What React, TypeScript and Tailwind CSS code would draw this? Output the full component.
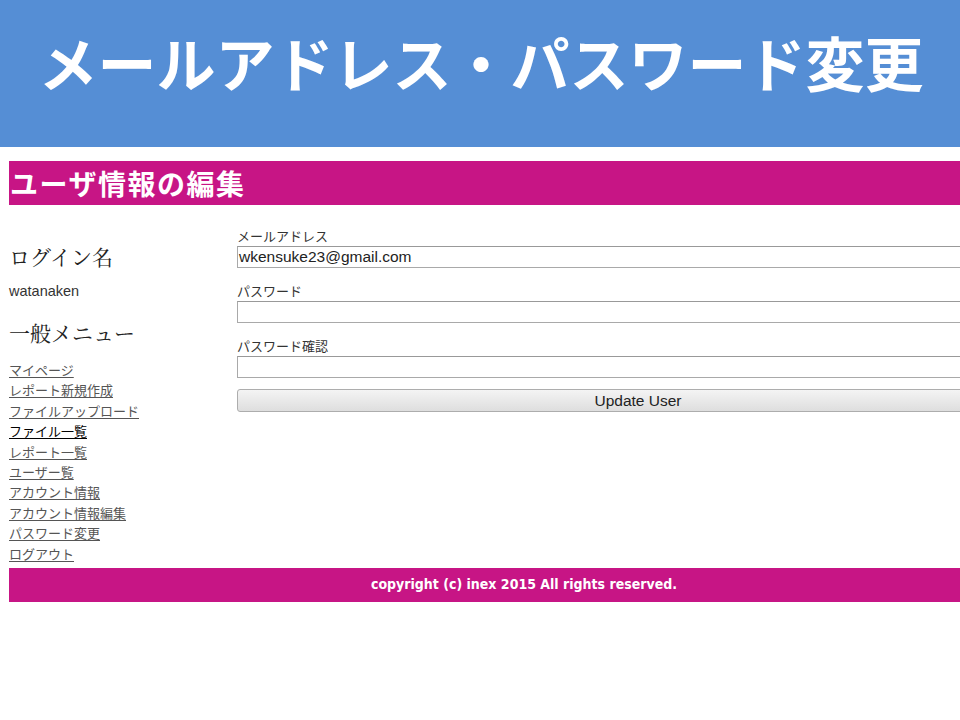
import React from "react";

const links = [
  "マイページ",
  "レポート新規作成",
  "ファイルアップロード",
  "ファイル一覧",
  "レポート一覧",
  "ユーザー覧",
  "アカウント情報",
  "アカウント情報編集",
  "パスワード変更",
  "ログアウト",
];

const jp = { fontFamily: '"Noto Sans CJK JP", sans-serif' };

export default function App() {
  return (
    <div className="w-[960px] h-[720px] overflow-hidden bg-white" style={jp}>
      <div className="h-[147px] bg-[#558ed5] flex justify-center pt-[22px] pl-[2px]">
        <h1 className="text-white font-bold text-[59px] leading-[80px] tracking-[0px] whitespace-nowrap">
          メールアドレス・パスワード変更
        </h1>
      </div>
      <div className="ml-[9px] w-[1030px] mt-[14px]">
        <div className="h-[44px] bg-[#c71585] flex items-center pl-[1px]">
          <span className="text-white font-bold text-[28px] leading-none tracking-[1.5px]">ユーザ情報の編集</span>
        </div>
        <div className="flex">
          <div className="w-[228px] shrink-0 pt-[37px]">
            <div className="text-[21px] leading-[28px] text-[#222]" style={{ fontFamily: '"Noto Serif CJK JP", "Noto Sans CJK JP", serif' }}>
              ログイン名
            </div>
            <div className="mt-[12px] text-[14.5px] leading-[18px] text-[#333]" style={{ fontFamily: '"Liberation Sans", sans-serif' }}>
              watanaken
            </div>
            <div className="mt-[18px] text-[21px] leading-[28px] text-[#222]" style={{ fontFamily: '"Noto Serif CJK JP", "Noto Sans CJK JP", serif' }}>
              一般メニュー
            </div>
            <ul className="mt-[12px]">
              {links.map((l) => (
                <li key={l} className="h-[20.4px] leading-[20px]">
                  <a
                    href="#"
                    className={
                      "text-[13px] underline underline-offset-2 " +
                      (l === "ファイル一覧" ? "text-black" : "text-[#555]")
                    }
                  >
                    {l}
                  </a>
                </li>
              ))}
            </ul>
          </div>
          <div className="w-[803px] pt-[21px]">
            <label className="block text-[13px] leading-[20px] text-[#333]">メールアドレス</label>
            <div className="h-[22px] border border-[#a9a9a9] border-t-[#999] flex items-center px-[1px] text-[15.5px] text-[#222]" style={{ fontFamily: '"Liberation Sans", sans-serif' }}>
              wkensuke23@gmail.com
            </div>
            <label className="block mt-[13px] text-[13px] leading-[20px] text-[#333]">パスワード</label>
            <div className="h-[22px] border border-[#a9a9a9] border-t-[#999]" />
            <label className="block mt-[13px] text-[13px] leading-[20px] text-[#333]">パスワード確認</label>
            <div className="h-[22px] border border-[#a9a9a9] border-t-[#999]" />
            <button
              className="mt-[11px] w-full h-[23px] rounded-[3px] border border-[#adadad] bg-gradient-to-b from-[#f4f4f4] to-[#dedede] text-[15.5px] leading-[20px] text-[#222]"
              style={{ fontFamily: '"Liberation Sans", sans-serif' }}
            >
              Update User
            </button>
          </div>
        </div>
        <div className="mt-[6px] h-[34px] bg-[#c71585] flex items-center justify-center">
          <span className="text-white font-bold text-[14px]" style={{ fontFamily: '"DejaVu Sans Condensed", "DejaVu Sans", sans-serif' }}>
            copyright (c) inex 2015 All rights reserved.
          </span>
        </div>
      </div>
    </div>
  );
}
